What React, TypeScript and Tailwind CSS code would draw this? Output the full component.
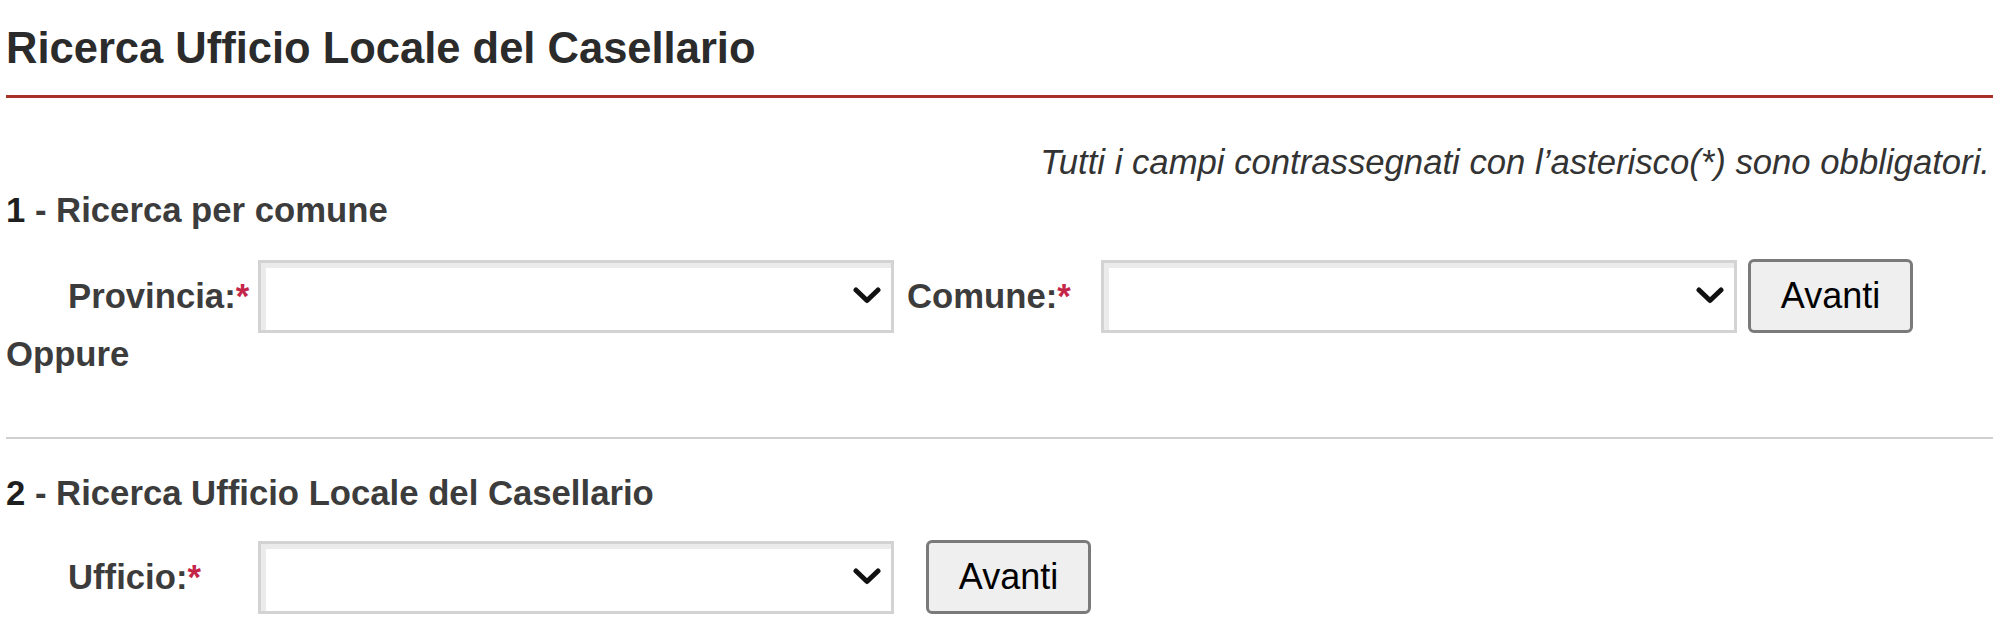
import React from 'react'

const font = { fontFamily: '"Liberation Sans", Arial, sans-serif' }

function Chevron() {
  return (
    <svg width="28" height="18" viewBox="0 0 28 18" aria-hidden="true">
      <polyline points="3,3 14,13.5 25,3" fill="none" stroke="#111" strokeWidth="5" strokeLinecap="round" strokeLinejoin="round" />
    </svg>
  )
}

function FakeSelect({ className = '' }: { className?: string }) {
  return (
    <div
      className={`h-[73px] w-[636px] shrink-0 bg-white border-[3px] border-[#d3d3d3] shadow-[inset_5px_5px_0_#ebebeb] flex items-center justify-end pr-[10px] ${className}`}
    >
      <Chevron />
    </div>
  )
}

function Button({ className = '' }: { className?: string }) {
  return (
    <button
      type="button"
      className={`h-[74px] w-[165px] shrink-0 bg-[#efefef] border-[3px] border-[#7a7a7a] rounded-[6px] text-[36px] text-black leading-none ${className}`}
    >
      Avanti
    </button>
  )
}

function Label({ text }: { text: string }) {
  return (
    <span className="text-[34.7px] font-bold text-[#3c3c3c] whitespace-nowrap">
      {text}
      <span className="text-[#c4264a]">*</span>
    </span>
  )
}

export default function App() {
  return (
    <div className="w-[2000px] h-[635px] bg-white px-[6px] overflow-hidden" style={font}>
      {/* Title */}
      <h1 className="pt-[22px] text-[43.5px] leading-[52px] font-bold text-[#2b2b2b]">
        Ricerca Ufficio Locale del Casellario
      </h1>
      <div className="mt-[21px] h-[3px] w-[1987px] bg-[#a83228]" />

      {/* Required note */}
      <p className="mt-[44px] text-right pr-[3px] w-[1987px] text-[34.7px] leading-[40px] italic text-[#333]">
        Tutti i campi contrassegnati con l’asterisco(*) sono obbligatori.
      </p>

      {/* Section 1 */}
      <div className="mt-[8px] text-[34.7px] leading-[40px] font-bold text-[#3c3c3c]">
        <span className="text-[#1f1f1f]">1</span> - Ricerca per comune
      </div>
      <div className="mt-[29px] flex items-center">
        <div className="w-[252px] pl-[62px] shrink-0">
          <Label text="Provincia:" />
        </div>
        <FakeSelect />
        <div className="ml-[13px] w-[194px] shrink-0">
          <Label text="Comune:" />
        </div>
        <FakeSelect />
        <Button className="ml-[11px]" />
      </div>
      <div className="mt-[1px] text-[34.7px] leading-[40px] font-bold text-[#3c3c3c]">Oppure</div>

      <div className="mt-[63px] h-[2px] w-[1987px] bg-[#d0d0d0]" />

      {/* Section 2 */}
      <div className="mt-[34px] text-[34.7px] leading-[40px] font-bold text-[#3c3c3c]">
        <span className="text-[#1f1f1f]">2</span> - Ricerca Ufficio Locale del Casellario
      </div>
      <div className="mt-[27px] flex items-center">
        <div className="w-[252px] pl-[62px] shrink-0">
          <Label text="Ufficio:" />
        </div>
        <FakeSelect />
        <Button className="ml-[32px]" />
      </div>
    </div>
  )
}
